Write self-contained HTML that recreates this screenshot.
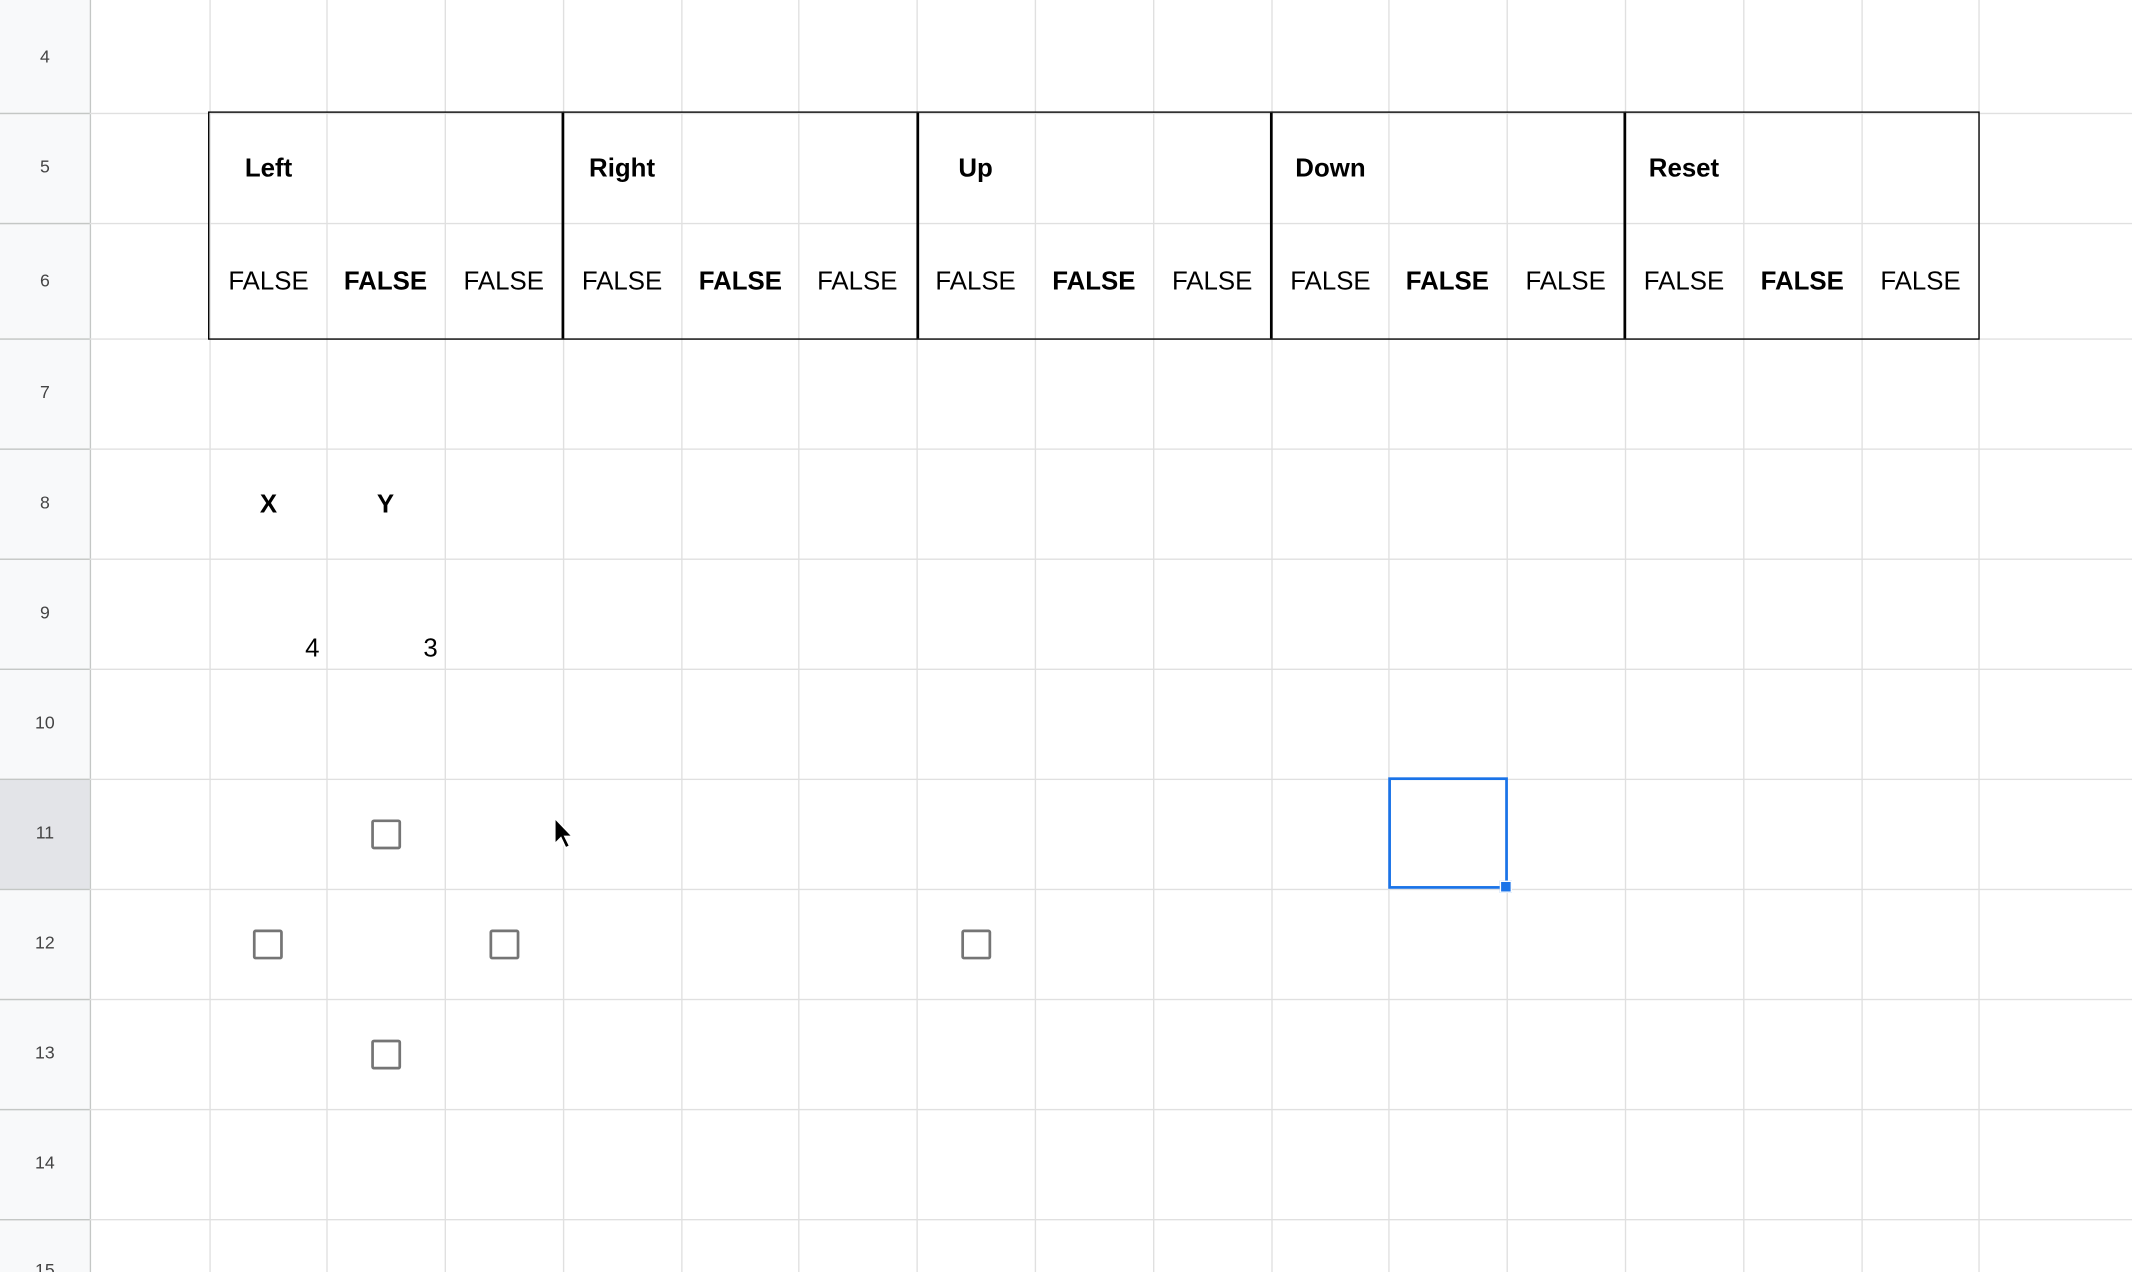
<!DOCTYPE html>
<html><head><style>
html,body{margin:0;padding:0;background:#fff;overflow:hidden}
#w{width:1568px;height:936px;position:relative;transform:scale(1.35969,1.35897);transform-origin:0 0;font-family:"Liberation Sans",Arial,sans-serif}
.v{position:absolute;top:0;height:936px;width:1px;background:#e0e0e0}
.h{position:absolute;left:0;width:1568px;height:1px;background:#e0e0e0}
.rh{position:absolute;left:0;width:66px;color:#444;font-size:13px;text-align:center}
.hl{position:absolute;left:0;width:66px;height:1px;background:#c4c7c5}
.t{position:absolute;font-size:19px;color:#000;text-align:center;width:87px}
.b{font-weight:bold}
.cb{position:absolute;width:18px;height:18px;border:2px solid #757575;border-radius:2px;box-sizing:content-box}
</style></head><body><div id="w">
<div style="position:absolute;left:0;top:0;width:66px;height:936px;background:#f8f9fa"></div>
<div style="position:absolute;left:0;top:574px;width:66px;height:80px;background:#e3e4e8"></div>
<div style="position:absolute;left:66px;top:0;width:1px;height:936px;background:#c4c7c5"></div>
<div class="v" style="left:154px"></div><div class="v" style="left:240px"></div><div class="v" style="left:327px"></div><div class="v" style="left:414px"></div><div class="v" style="left:501px"></div><div class="v" style="left:587px"></div><div class="v" style="left:674px"></div><div class="v" style="left:761px"></div><div class="v" style="left:848px"></div><div class="v" style="left:935px"></div><div class="v" style="left:1021px"></div><div class="v" style="left:1108px"></div><div class="v" style="left:1195px"></div><div class="v" style="left:1282px"></div><div class="v" style="left:1369px"></div><div class="v" style="left:1455px"></div>
<div class="h" style="top:83px"></div><div class="h" style="top:164px"></div><div class="h" style="top:249px"></div><div class="h" style="top:330px"></div><div class="h" style="top:411px"></div><div class="h" style="top:492px"></div><div class="h" style="top:573px"></div><div class="h" style="top:654px"></div><div class="h" style="top:735px"></div><div class="h" style="top:816px"></div><div class="h" style="top:897px"></div>
<div class="hl" style="top:83px"></div><div class="hl" style="top:164px"></div><div class="hl" style="top:249px"></div><div class="hl" style="top:330px"></div><div class="hl" style="top:411px"></div><div class="hl" style="top:492px"></div><div class="hl" style="top:573px"></div><div class="hl" style="top:654px"></div><div class="hl" style="top:735px"></div><div class="hl" style="top:816px"></div><div class="hl" style="top:897px"></div>
<div class="rh" style="top:34px">4</div><div class="rh" style="top:115px">5</div><div class="rh" style="top:199px">6</div><div class="rh" style="top:281px">7</div><div class="rh" style="top:362px">8</div><div class="rh" style="top:443px">9</div><div class="rh" style="top:524px">10</div><div class="rh" style="top:605px">11</div><div class="rh" style="top:686px">12</div><div class="rh" style="top:767px">13</div><div class="rh" style="top:848px">14</div><div class="rh" style="top:927px">15</div>
<div style="position:absolute;left:153px;top:82px;width:1301px;height:166px;border:1.5px solid #000"></div>
<div style="position:absolute;left:413px;top:83px;width:1.5px;height:166px;background:#000"></div>
<div style="position:absolute;left:674px;top:83px;width:1.5px;height:166px;background:#000"></div>
<div style="position:absolute;left:934px;top:83px;width:1.5px;height:166px;background:#000"></div>
<div style="position:absolute;left:1194px;top:83px;width:1.5px;height:166px;background:#000"></div>
<div class="t b" style="left:154px;top:114px">Left</div>
<div class="t b" style="left:414px;top:114px">Right</div>
<div class="t b" style="left:674px;top:114px">Up</div>
<div class="t b" style="left:935px;top:114px">Down</div>
<div class="t b" style="left:1195px;top:114px">Reset</div>
<div class="t" style="left:154px;top:197px">FALSE</div><div class="t b" style="left:240px;top:197px">FALSE</div><div class="t" style="left:327px;top:197px">FALSE</div>
<div class="t" style="left:414px;top:197px">FALSE</div><div class="t b" style="left:501px;top:197px">FALSE</div><div class="t" style="left:587px;top:197px">FALSE</div>
<div class="t" style="left:674px;top:197px">FALSE</div><div class="t b" style="left:761px;top:197px">FALSE</div><div class="t" style="left:848px;top:197px">FALSE</div>
<div class="t" style="left:935px;top:197px">FALSE</div><div class="t b" style="left:1021px;top:197px">FALSE</div><div class="t" style="left:1108px;top:197px">FALSE</div>
<div class="t" style="left:1195px;top:197px">FALSE</div><div class="t b" style="left:1282px;top:197px">FALSE</div><div class="t" style="left:1369px;top:197px">FALSE</div>
<div class="t b" style="left:154px;top:361px">X</div><div class="t b" style="left:240px;top:361px">Y</div>
<div class="t" style="left:154px;top:467px;width:81px;text-align:right">4</div>
<div class="t" style="left:240px;top:467px;width:82px;text-align:right">3</div>
<div class="cb" style="left:273px;top:603px"></div>
<div class="cb" style="left:186px;top:684px"></div>
<div class="cb" style="left:360px;top:684px"></div>
<div class="cb" style="left:707px;top:684px"></div>
<div class="cb" style="left:273px;top:765px"></div>
<div style="position:absolute;left:1021px;top:572px;width:84px;height:78px;border:2px solid #1a73e8"></div>
<div style="position:absolute;left:1103px;top:648px;width:7px;height:7px;background:#1a73e8;border:1px solid #fff"></div>
<svg style="position:absolute;left:406px;top:601px" width="18" height="26" viewBox="0 0 18 26"><path d="M2 1 L2 20 L6.5 15.5 L10 23 L13 21.5 L9.5 14.5 L15 14.5 Z" fill="#000" stroke="#fff" stroke-width="1.2"/></svg>
</div></body></html>
